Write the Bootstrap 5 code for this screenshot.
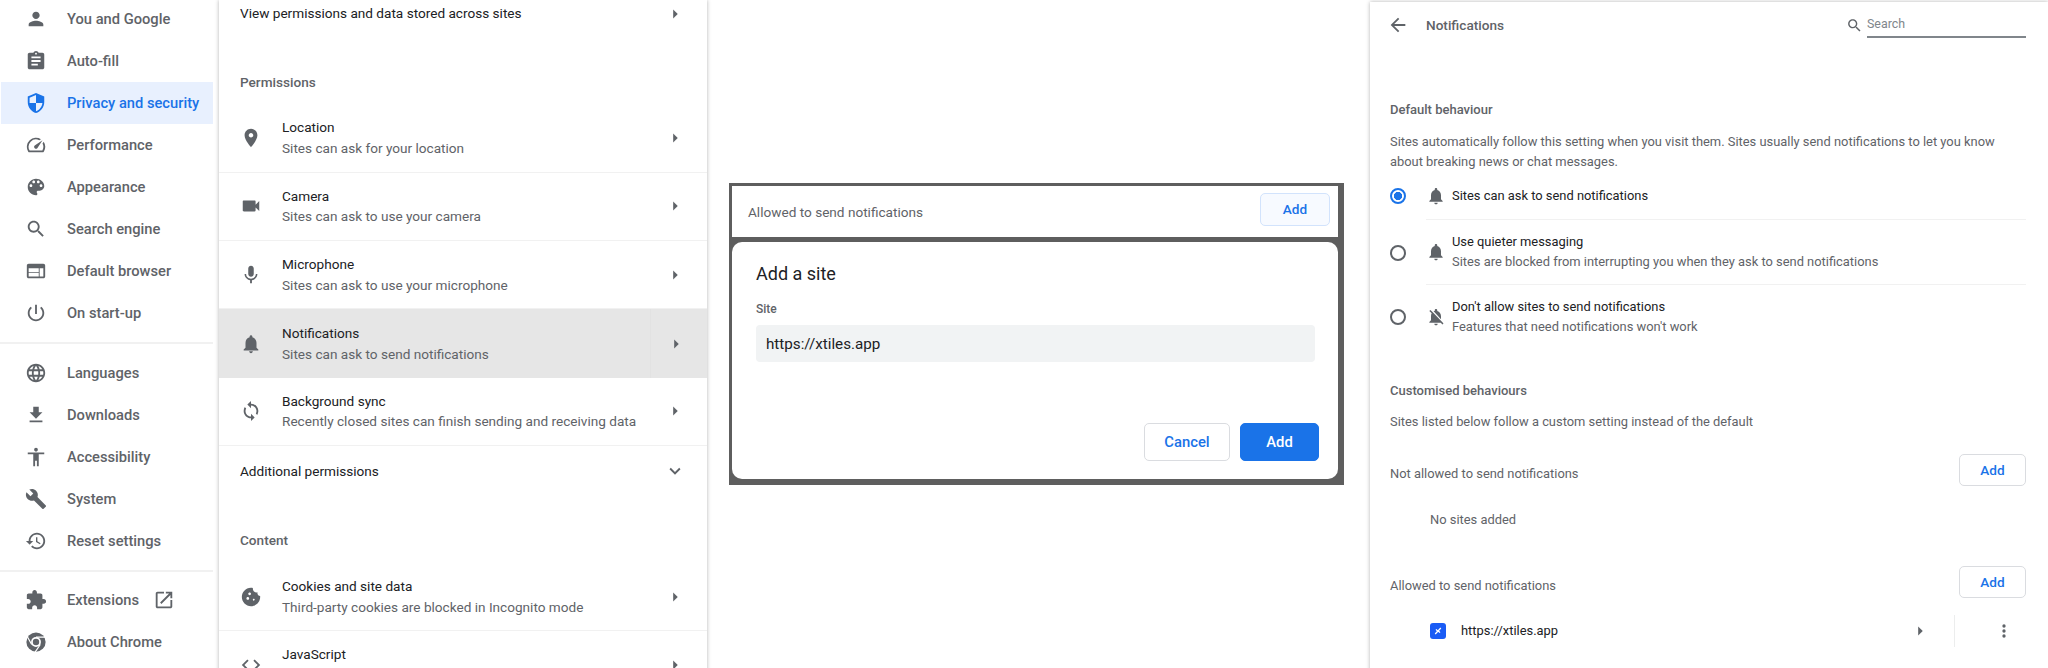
<!doctype html>
<html lang="en">
<head>
<meta charset="utf-8">
<title>Settings - Notifications</title>
<link rel="stylesheet" href="https://cdn.jsdelivr.net/npm/bootstrap@5.3.0/dist/css/bootstrap.min.css">
<style>
html,body{height:668px;overflow:hidden;background:#fff}
body{font-family:Roboto,"Liberation Sans",sans-serif;color:#202124;font-size:13.6px}
.shell{height:668px;overflow:hidden}
.gi{width:22px;height:22px;fill:#5f6368;flex:none}
.side{width:213px;flex:none;margin-top:-2px}
.side-row{height:42px;padding-left:23.5px;gap:20.5px;color:#5f6368;font-weight:500;font-size:14.7px;margin-left:1px}
.side-row.on{background:#e8f0fe;color:#1a73e8}
.side-row.on .gi{fill:#1a73e8}
.side-sep{border-top:2px solid #f1f1f1;margin:8px 0;opacity:1}
.side-sep.tail{margin-bottom:7px}
.open-ico{margin-left:-7px}
.mid{width:488px;flex:none;margin-left:6px;box-shadow:0 0 4px rgba(0,0,0,.3);height:690px;background:#fff}
.row-top{height:27px;padding:0 21px;color:#202124}
.row-add{height:51px}
.sec-head{padding:0 21px 12px;font-weight:500;color:#5f6368;line-height:21px}
.h-perm{height:77.5px}
.h-cont{height:66px}
.perm{height:68.3px;padding:0 21px;border-bottom:1.5px solid #f1f1f1}
.perm.sel{background:#e6e6e6;border-bottom:0;padding-right:0}
.perm-text{margin-left:20px;line-height:20.7px}
.perm-text.solo{align-self:flex-start;margin-top:13px}
.muted-line{color:#5f6368}
.arrow{margin-left:auto;margin-right:0}
.arrow-cell{margin-left:auto;width:57px;height:100%;border-left:1px solid #e2e2e2;padding-right:7px}
.frame{width:615px;flex:none;margin-left:22px;margin-top:182.5px;height:302.5px;background:#5e5e5e;padding:3.5px 6px 6px 3px}
.frame-top{height:51px;background:#fff;padding:7px 8px 0 16px}
.frame-label{margin-top:9px;color:#5f6368}
.dlg{margin-top:5px;height:237px;border-radius:10px;border:0;padding:20px 23px 18px 24px}
.dlg-title{font-size:18px;font-weight:400;color:#202124;line-height:24px;margin:0}
.dlg-label{font-size:12px;font-weight:500;color:#5f6368;margin:15px 0 8px;line-height:16px}
.dlg-input.form-control{background:#f1f3f4;border:0;border-radius:4px;height:37px;padding:0 10px;font-size:15.2px;color:#202124;box-shadow:none}
.dlg-btns{margin-right:-4px;gap:10px}
.btn-ol.btn{border:1px solid #dadce0;color:#1a73e8;background:#fff;font-weight:500;font-size:13.6px;border-radius:5px;padding:0}
.btn-fill.btn{background:#1a73e8;border:1px solid #1a73e8;color:#fff;font-weight:500;font-size:14.8px;border-radius:5px;padding:0;width:79px;height:38px}
.b-cancel.btn{width:86px;height:38px;font-size:14.8px}
.b-top.btn{width:70px;height:33px;background:#f7faff;border-color:#d2e3fc}
.b-add{width:67px;height:32px;flex:none}
.right{width:678px;flex:none;margin-left:26px;box-shadow:0 0 4px rgba(0,0,0,.3);margin-top:2px;height:690px;padding:0 22px 0 20px;font-size:12.9px;background:#fff}
.r-head{height:46px;color:#5f6368}
.back-ico{margin-left:-3px}
.r-title{font-weight:500;font-size:13.6px;margin-left:17px;color:#5f6368}
.search-ico{width:17px;height:17px;margin-left:auto}
.r-search{width:159px;height:26px;border-bottom:2px solid #80868b;color:#80868b;font-size:12.4px;line-height:24px;margin-left:4px}
.r-section{font-weight:500;color:#5f6368;font-size:13px;line-height:20px}
.r-default{margin-top:52px}
.r-custom{margin-top:32px}
.r-text{color:#5f6368;line-height:20px}
.t-intro{margin-top:12px}
.t-listed{margin-top:11px}
.rad.form-check-input{width:16px;height:16px;margin:0;border:2px solid #5f6368;background-color:#fff;flex:none;box-shadow:none}
.rad.form-check-input:checked{border-color:#1a73e8;background-color:#fff;background-image:radial-gradient(circle,#1a73e8 0 3.8px,#fff 4.4px)}
.rad-body{margin-left:20px;border-bottom:1.5px solid #f1f1f1;line-height:20px}
.h48{height:48px}.h65{height:65px}.h64{height:64px;border-bottom:0}
.bell{width:20px;height:20px}
.rad-text{margin-left:6px}
.exc-row{margin-top:22px}
.exc-row.second{margin-top:36px}
.exc-label{margin-top:10px;color:#5f6368}
.no-sites{margin:24px 0 0 40px;line-height:20px;color:#5f6368}
.site-row{height:32px;margin-top:17px;padding-left:40px;padding-right:12.3px}
.fav{width:16px;height:16px;flex:none;fill:#1a5cf5}
.site-url{margin-left:15px}
.vsep{width:1px;height:32px;background:#eceded;margin-left:23px}
.dots{width:20px;height:20px;margin-left:39px}
</style>
</head>
<body>
<svg width="0" height="0" class="position-absolute">
<defs>
<symbol id="i-person" viewBox="0 0 24 24"><path d="M12 12c2.21 0 4-1.79 4-4s-1.79-4-4-4-4 1.79-4 4 1.79 4 4 4zm0 2c-2.67 0-8 1.34-8 4v2h16v-2c0-2.66-5.33-4-8-4z"/></symbol>
<symbol id="i-assign" viewBox="0 0 24 24"><path d="M19 3h-4.18C14.4 1.84 13.3 1 12 1c-1.3 0-2.4.84-2.82 2H5c-1.1 0-2 .9-2 2v14c0 1.1.9 2 2 2h14c1.1 0 2-.9 2-2V5c0-1.1-.9-2-2-2zm-7 0c.55 0 1 .45 1 1s-.45 1-1 1-1-.45-1-1 .45-1 1-1zm2 14H7v-2h7v2zm3-4H7v-2h10v2zm0-4H7V7h10v2z"/></symbol>
<symbol id="i-shield" viewBox="0 0 24 24"><path d="M12 1L3 5v6c0 5.55 3.84 10.74 9 12 5.16-1.26 9-6.45 9-12V5l-9-4zm0 10.99h7c-.53 4.12-3.28 7.79-7 8.94V12H5V6.3l7-3.11v8.8z"/></symbol>
<symbol id="i-speed" viewBox="0 0 24 24"><path d="M20.38 8.57l-1.23 1.85a8 8 0 0 1-.22 7.58H5.07A8 8 0 0 1 15.58 6.85l1.85-1.23A10 10 0 0 0 3.35 19a2 2 0 0 0 1.72 1h13.85a2 2 0 0 0 1.74-1 10 10 0 0 0-.27-10.44zm-9.79 6.84a2 2 0 0 0 2.83 0l5.66-8.49-8.49 5.66a2 2 0 0 0 0 2.83z"/></symbol>
<symbol id="i-palette" viewBox="0 0 24 24"><path d="M12 3c-4.97 0-9 4.03-9 9s4.03 9 9 9c.83 0 1.5-.67 1.5-1.5 0-.39-.15-.74-.39-1.01-.23-.26-.38-.61-.38-.99 0-.83.67-1.5 1.5-1.5H16c2.76 0 5-2.24 5-5 0-4.42-4.03-8-9-8zm-5.5 9c-.83 0-1.5-.67-1.5-1.5S5.67 9 6.5 9 8 9.67 8 10.5 7.33 12 6.5 12zm3-4C8.67 8 8 7.33 8 6.5S8.67 5 9.5 5s1.5.67 1.5 1.5S10.33 8 9.5 8zm5 0c-.83 0-1.5-.67-1.5-1.5S13.67 5 14.5 5s1.5.67 1.5 1.5S15.33 8 14.5 8zm3 4c-.83 0-1.5-.67-1.5-1.5S16.67 9 17.5 9s1.5.67 1.5 1.5-.67 1.5-1.5 1.5z"/></symbol>
<symbol id="i-search" viewBox="0 0 24 24"><path d="M15.5 14h-.79l-.28-.27C15.41 12.59 16 11.11 16 9.5 16 5.91 13.09 3 9.5 3S3 5.91 3 9.5 5.91 16 9.5 16c1.61 0 3.09-.59 4.23-1.57l.27.28v.79l5 4.99L20.49 19l-4.99-5zm-6 0C7.01 14 5 11.99 5 9.5S7.01 5 9.5 5 14 7.01 14 9.5 11.99 14 9.5 14z"/></symbol>
<symbol id="i-web" viewBox="0 0 24 24"><path d="M20 4H4c-1.1 0-1.99.9-1.99 2L2 18c0 1.1.9 2 2 2h16c1.1 0 2-.9 2-2V6c0-1.1-.9-2-2-2zm-5 14H4v-4h11v4zm0-5H4V9h11v4zm5 5h-4V9h4v9z"/></symbol>
<symbol id="i-power" viewBox="0 0 24 24"><path d="M13 3h-2v10h2V3zm4.83 2.17l-1.42 1.42C17.99 7.86 19 9.81 19 12c0 3.87-3.13 7-7 7s-7-3.13-7-7c0-2.19 1.01-4.14 2.58-5.42L6.17 5.17C4.23 6.82 3 9.26 3 12c0 4.97 4.03 9 9 9s9-4.03 9-9c0-2.74-1.23-5.18-3.17-6.83z"/></symbol>
<symbol id="i-lang" viewBox="0 0 24 24"><path d="M11.99 2C6.47 2 2 6.48 2 12s4.47 10 9.99 10C17.52 22 22 17.52 22 12S17.52 2 11.99 2zm6.93 6h-2.95c-.32-1.25-.78-2.45-1.38-3.56 1.84.63 3.37 1.91 4.33 3.56zM12 4.04c.83 1.2 1.48 2.53 1.91 3.96h-3.82c.43-1.43 1.08-2.76 1.91-3.96zM4.26 14C4.1 13.36 4 12.69 4 12s.1-1.36.26-2h3.38c-.08.66-.14 1.32-.14 2 0 .68.06 1.34.14 2H4.26zm.82 2h2.95c.32 1.25.78 2.45 1.38 3.56-1.84-.63-3.37-1.9-4.33-3.56zm2.95-8H5.08c.96-1.66 2.49-2.93 4.33-3.56C8.81 5.55 8.35 6.75 8.03 8zM12 19.96c-.83-1.2-1.48-2.53-1.91-3.96h3.82c-.43 1.43-1.08 2.76-1.91 3.96zM14.34 14H9.66c-.09-.66-.16-1.32-.16-2 0-.68.07-1.35.16-2h4.68c.09.65.16 1.32.16 2 0 .68-.07 1.34-.16 2zm.25 5.56c.6-1.11 1.06-2.31 1.38-3.56h2.95c-.96 1.65-2.49 2.93-4.33 3.56zM16.36 14c.08-.66.14-1.32.14-2 0-.68-.06-1.34-.14-2h3.38c.16.64.26 1.31.26 2s-.1 1.36-.26 2h-3.38z"/></symbol>
<symbol id="i-down" viewBox="0 0 24 24"><path d="M19 9h-4V3H9v6H5l7 7 7-7zM5 18v2h14v-2H5z"/></symbol>
<symbol id="i-access" viewBox="0 0 24 24"><path d="M12 2c1.1 0 2 .9 2 2s-.9 2-2 2-2-.9-2-2 .9-2 2-2zm9 7h-6v13h-2v-6h-2v6H9V9H3V7h18v2z"/></symbol>
<symbol id="i-build" viewBox="0 0 24 24"><path d="M22.7 19l-9.1-9.1c.9-2.3.4-5-1.5-6.9-2-2-5-2.4-7.4-1.3L9 6 6 9 1.6 4.7C.4 7.1.9 10.1 2.9 12.1c1.9 1.9 4.6 2.4 6.9 1.5l9.1 9.1c.4.4 1 .4 1.4 0l2.3-2.3c.5-.4.5-1.1.1-1.4z"/></symbol>
<symbol id="i-restore" viewBox="0 0 24 24"><path d="M13 3c-4.97 0-9 4.03-9 9H1l3.89 3.89.07.14L9 12H6c0-3.87 3.13-7 7-7s7 3.13 7 7-3.13 7-7 7c-1.93 0-3.68-.79-4.94-2.06l-1.42 1.42C8.27 19.99 10.51 21 13 21c4.97 0 9-4.03 9-9s-4.03-9-9-9zm-1 5v5l4.28 2.54.72-1.21-3.5-2.08V8H12z"/></symbol>
<symbol id="i-ext" viewBox="0 0 24 24"><path d="M20.5 11H19V7c0-1.1-.9-2-2-2h-4V3.5C13 2.12 11.88 1 10.5 1S8 2.12 8 3.5V5H4c-1.1 0-1.99.9-1.99 2v3.8H3.5c1.49 0 2.7 1.21 2.7 2.7s-1.21 2.7-2.7 2.7H2V20c0 1.1.9 2 2 2h3.8v-1.5c0-1.49 1.21-2.7 2.7-2.7 1.49 0 2.7 1.21 2.7 2.7V22H17c1.1 0 2-.9 2-2v-4h1.5c1.38 0 2.5-1.12 2.5-2.5S21.88 11 20.5 11z"/></symbol>
<symbol id="i-open" viewBox="0 0 24 24"><path d="M19 19H5V5h7V3H5c-1.11 0-2 .9-2 2v14c0 1.1.89 2 2 2h14c1.1 0 2-.9 2-2v-7h-2v7zM14 3v2h3.59l-9.83 9.83 1.41 1.41L19 6.41V10h2V3h-7z"/></symbol>
<symbol id="i-chrome" viewBox="0 0 24 24"><circle cx="12" cy="12" r="10.5"/><circle cx="12" cy="12" r="5.4" fill="#fff"/><circle cx="12" cy="12" r="3.5"/><path d="M12 6.6H22M7.3 14.7L2.4 6M16.7 14.7L11 23" stroke="#fff" stroke-width="1.3" fill="none"/></symbol>
<symbol id="i-loc" viewBox="0 0 24 24"><path d="M12 2C8.13 2 5 5.13 5 9c0 5.25 7 13 7 13s7-7.75 7-13c0-3.87-3.13-7-7-7zm0 9.5c-1.38 0-2.5-1.12-2.5-2.5s1.12-2.5 2.5-2.5 2.5 1.12 2.5 2.5-1.12 2.5-2.5 2.5z"/></symbol>
<symbol id="i-cam" viewBox="0 0 24 24"><path d="M17 10.5V7c0-.55-.45-1-1-1H4c-.55 0-1 .45-1 1v10c0 .55.45 1 1 1h12c.55 0 1-.45 1-1v-3.5l4 4v-11l-4 4z"/></symbol>
<symbol id="i-mic" viewBox="0 0 24 24"><path d="M12 14c1.66 0 2.99-1.34 2.99-3L15 5c0-1.66-1.34-3-3-3S9 3.34 9 5v6c0 1.66 1.34 3 3 3zm5.3-3c0 3-2.54 5.1-5.3 5.1S6.7 14 6.7 11H5c0 3.41 2.72 6.23 6 6.72V21h2v-3.28c3.28-.48 6-3.3 6-6.72h-1.7z"/></symbol>
<symbol id="i-bell" viewBox="0 0 24 24"><path d="M12 22c1.1 0 2-.9 2-2h-4c0 1.1.89 2 2 2zm6-6v-5c0-3.07-1.64-5.64-4.5-6.32V4c0-.83-.67-1.5-1.5-1.5s-1.5.67-1.5 1.5v.68C7.63 5.36 6 7.92 6 11v5l-2 2v1h16v-1l-2-2z"/></symbol>
<symbol id="i-belloff" viewBox="0 0 24 24"><path d="M20 18.69L7.84 6.14 5.27 3.49 4 4.76l2.8 2.8v.01c-.52.99-.8 2.16-.8 3.42v5l-2 2v1h13.73l2 2L21 19.72l-1-1.03zM12 22c1.11 0 2-.89 2-2h-4c0 1.11.89 2 2 2zm6-7.32V11c0-3.08-1.64-5.64-4.5-6.32V4c0-.83-.67-1.5-1.5-1.5s-1.5.67-1.5 1.5v.68c-.15.03-.29.08-.42.12-.1.03-.2.07-.3.11h-.01c-.2.08-.4.17-.59.27-.01 0-.01 0-.02.01L18 14.68z"/></symbol>
<symbol id="i-sync" viewBox="0 0 24 24"><path d="M12 4V1L8 5l4 4V6c3.31 0 6 2.69 6 6 0 1.01-.25 1.97-.7 2.8l1.46 1.46C19.54 15.03 20 13.57 20 12c0-4.42-3.58-8-8-8zm0 14c-3.31 0-6-2.69-6-6 0-1.01.25-1.97.7-2.8L5.24 7.74C4.46 8.97 4 10.43 4 12c0 4.42 3.58 8 8 8v3l4-4-4-4v3z"/></symbol>
<symbol id="i-cookie" viewBox="0 0 24 24"><path d="M21.95 10.99c-1.79-.03-3.7-1.95-2.68-4.22-2.97 1-5.78-1.59-5.19-4.56C7.1.74 2 6.41 2 12c0 5.52 4.48 10 10 10 5.89 0 10.54-5.08 9.95-11.01zM8.5 15c-.83 0-1.5-.67-1.5-1.5S7.67 12 8.5 12s1.5.67 1.5 1.5S9.33 15 8.5 15zm2-5C9.67 10 9 9.33 9 8.5S9.67 7 10.5 7s1.5.67 1.5 1.5-.67 1.5-1.5 1.5zm4.5 6c-.55 0-1-.45-1-1s.45-1 1-1 1 .45 1 1-.45 1-1 1z"/></symbol>
<symbol id="i-code" viewBox="0 0 24 24"><path d="M9.4 16.6L4.8 12l4.6-4.6L8 6l-6 6 6 6 1.4-1.4zm5.2 0l4.6-4.6-4.6-4.6L16 6l6 6-6 6-1.4-1.4z"/></symbol>
<symbol id="i-back" viewBox="0 0 24 24"><path d="M20 11H7.83l5.59-5.59L12 4l-8 8 8 8 1.41-1.41L7.83 13H20v-2z"/></symbol>
<symbol id="i-more" viewBox="0 0 24 24"><circle cx="12" cy="6" r="2"/><circle cx="12" cy="12" r="2"/><circle cx="12" cy="18" r="2"/></symbol>
<symbol id="i-right" viewBox="0 0 24 24"><path d="M10 17l5-5-5-5v10z"/></symbol>
<symbol id="i-expand" viewBox="0 0 24 24"><path d="M16.59 8.59L12 13.17 7.41 8.59 6 10l6 6 6-6z"/></symbol>
<symbol id="i-fav" viewBox="0 0 16 16"><rect width="16" height="16" rx="3"/><path d="M10.8 5L5.2 11M6 6.4L7.6 8M8.4 8L10 9.6" stroke="#fff" stroke-width="1.3" fill="none"/></symbol>
</defs>
</svg>

<div class="shell d-flex align-items-start">
  <nav class="side">
    <div class="side-row d-flex align-items-center"><svg class="gi"><use href="#i-person"/></svg>You and Google</div>
    <div class="side-row d-flex align-items-center"><svg class="gi"><use href="#i-assign"/></svg>Auto-fill</div>
    <div class="side-row on d-flex align-items-center"><svg class="gi"><use href="#i-shield"/></svg>Privacy and security</div>
    <div class="side-row d-flex align-items-center"><svg class="gi"><use href="#i-speed"/></svg>Performance</div>
    <div class="side-row d-flex align-items-center"><svg class="gi"><use href="#i-palette"/></svg>Appearance</div>
    <div class="side-row d-flex align-items-center"><svg class="gi"><use href="#i-search"/></svg>Search engine</div>
    <div class="side-row d-flex align-items-center"><svg class="gi"><use href="#i-web"/></svg>Default browser</div>
    <div class="side-row d-flex align-items-center"><svg class="gi"><use href="#i-power"/></svg>On start-up</div>
    <hr class="side-sep">
    <div class="side-row d-flex align-items-center"><svg class="gi"><use href="#i-lang"/></svg>Languages</div>
    <div class="side-row d-flex align-items-center"><svg class="gi"><use href="#i-down"/></svg>Downloads</div>
    <div class="side-row d-flex align-items-center"><svg class="gi"><use href="#i-access"/></svg>Accessibility</div>
    <div class="side-row d-flex align-items-center"><svg class="gi"><use href="#i-build"/></svg>System</div>
    <div class="side-row d-flex align-items-center"><svg class="gi"><use href="#i-restore"/></svg>Reset settings</div>
    <hr class="side-sep tail">
    <div class="side-row d-flex align-items-center"><svg class="gi"><use href="#i-ext"/></svg><span>Extensions</span><svg class="gi open-ico"><use href="#i-open"/></svg></div>
    <div class="side-row d-flex align-items-center"><svg class="gi"><use href="#i-chrome"/></svg>About Chrome</div>
  </nav>

  <main class="mid">
    <div class="row-top d-flex align-items-center">View permissions and data stored across sites<svg class="gi arrow"><use href="#i-right"/></svg></div>
    <div class="sec-head h-perm d-flex align-items-end">Permissions</div>
    <div class="perm d-flex align-items-center"><svg class="gi"><use href="#i-loc"/></svg><div class="perm-text"><div>Location</div><div class="muted-line">Sites can ask for your location</div></div><svg class="gi arrow"><use href="#i-right"/></svg></div>
    <div class="perm d-flex align-items-center"><svg class="gi"><use href="#i-cam"/></svg><div class="perm-text"><div>Camera</div><div class="muted-line">Sites can ask to use your camera</div></div><svg class="gi arrow"><use href="#i-right"/></svg></div>
    <div class="perm d-flex align-items-center"><svg class="gi"><use href="#i-mic"/></svg><div class="perm-text"><div>Microphone</div><div class="muted-line">Sites can ask to use your microphone</div></div><svg class="gi arrow"><use href="#i-right"/></svg></div>
    <div class="perm sel d-flex align-items-center"><svg class="gi"><use href="#i-bell"/></svg><div class="perm-text"><div>Notifications</div><div class="muted-line">Sites can ask to send notifications</div></div><div class="arrow-cell d-flex align-items-center justify-content-center"><svg class="gi"><use href="#i-right"/></svg></div></div>
    <div class="perm d-flex align-items-center"><svg class="gi"><use href="#i-sync"/></svg><div class="perm-text"><div>Background sync</div><div class="muted-line">Recently closed sites can finish sending and receiving data</div></div><svg class="gi arrow"><use href="#i-right"/></svg></div>
    <div class="row-top row-add d-flex align-items-center">Additional permissions<svg class="gi arrow"><use href="#i-expand"/></svg></div>
    <div class="sec-head h-cont d-flex align-items-end">Content</div>
    <div class="perm d-flex align-items-center"><svg class="gi"><use href="#i-cookie"/></svg><div class="perm-text"><div>Cookies and site data</div><div class="muted-line">Third-party cookies are blocked in Incognito mode</div></div><svg class="gi arrow"><use href="#i-right"/></svg></div>
    <div class="perm d-flex align-items-center"><svg class="gi"><use href="#i-code"/></svg><div class="perm-text solo"><div>JavaScript</div></div><svg class="gi arrow"><use href="#i-right"/></svg></div>
  </main>

  <section class="frame">
    <div class="frame-top d-flex justify-content-between align-items-start">
      <span class="frame-label">Allowed to send notifications</span>
      <button class="btn btn-ol b-top">Add</button>
    </div>
    <div class="card dlg">
      <h5 class="dlg-title">Add a site</h5>
      <div class="dlg-label">Site</div>
      <input class="form-control dlg-input" value="https://xtiles.app" aria-label="Site">
      <div class="dlg-btns d-flex justify-content-end mt-auto">
        <button class="btn btn-ol b-cancel">Cancel</button>
        <button class="btn btn-fill">Add</button>
      </div>
    </div>
  </section>

  <section class="right">
    <div class="r-head d-flex align-items-center">
      <svg class="gi back-ico"><use href="#i-back"/></svg>
      <span class="r-title">Notifications</span>
      <svg class="gi search-ico"><use href="#i-search"/></svg>
      <div class="r-search">Search</div>
    </div>
    <div class="r-section r-default">Default behaviour</div>
    <div class="r-text t-intro">Sites automatically follow this setting when you visit them. Sites usually send notifications to let you know<br>about breaking news or chat messages.</div>

    <div class="d-flex align-items-center">
      <input class="form-check-input rad" type="radio" name="def" checked aria-label="Sites can ask">
      <div class="rad-body h48 flex-grow-1 d-flex align-items-center">
        <svg class="gi bell"><use href="#i-bell"/></svg>
        <div class="rad-text">Sites can ask to send notifications</div>
      </div>
    </div>
    <div class="d-flex align-items-center">
      <input class="form-check-input rad" type="radio" name="def" aria-label="Use quieter">
      <div class="rad-body h65 flex-grow-1 d-flex align-items-center">
        <svg class="gi bell"><use href="#i-bell"/></svg>
        <div class="rad-text"><div>Use quieter messaging</div><div class="muted-line">Sites are blocked from interrupting you when they ask to send notifications</div></div>
      </div>
    </div>
    <div class="d-flex align-items-center">
      <input class="form-check-input rad" type="radio" name="def" aria-label="Don't allow">
      <div class="rad-body h64 flex-grow-1 d-flex align-items-center">
        <svg class="gi bell"><use href="#i-belloff"/></svg>
        <div class="rad-text"><div>Don't allow sites to send notifications</div><div class="muted-line">Features that need notifications won't work</div></div>
      </div>
    </div>

    <div class="r-section r-custom">Customised behaviours</div>
    <div class="r-text t-listed">Sites listed below follow a custom setting instead of the default</div>

    <div class="exc-row d-flex justify-content-between align-items-start">
      <span class="exc-label">Not allowed to send notifications</span>
      <button class="btn btn-ol b-add">Add</button>
    </div>
    <div class="no-sites">No sites added</div>
    <div class="exc-row second d-flex justify-content-between align-items-start">
      <span class="exc-label">Allowed to send notifications</span>
      <button class="btn btn-ol b-add">Add</button>
    </div>
    <div class="site-row d-flex align-items-center">
      <svg class="fav"><use href="#i-fav"/></svg>
      <span class="site-url">https://xtiles.app</span>
      <svg class="gi arrow"><use href="#i-right"/></svg>
      <div class="vsep"></div>
      <svg class="gi dots"><use href="#i-more"/></svg>
    </div>
  </section>
</div>
</body>
</html>
